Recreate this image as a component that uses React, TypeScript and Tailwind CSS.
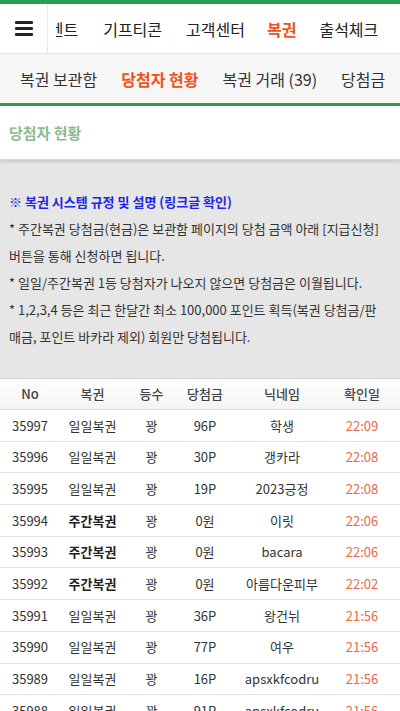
import React from "react";

const rows = [
  ["35997", "일일복권", false, "96P", "학생", "22:09"],
  ["35996", "일일복권", false, "30P", "갱카라", "22:08"],
  ["35995", "일일복권", false, "19P", "2023긍정", "22:08"],
  ["35994", "주간복권", true, "0원", "이릿", "22:06"],
  ["35993", "주간복권", true, "0원", "bacara", "22:06"],
  ["35992", "주간복권", true, "0원", "아름다운피부", "22:02"],
  ["35991", "일일복권", false, "36P", "왕건뉘", "21:56"],
  ["35990", "일일복권", false, "77P", "여우", "21:56"],
  ["35989", "일일복권", false, "16P", "apsxkfcodru", "21:56"],
  ["35988", "일일복권", false, "91P", "apsxkfcodru", "21:56"],
] as const;

const font = { fontFamily: '"Noto Sans CJK KR", "Noto Sans", sans-serif' };

export default function App() {
  return (
    <div className="w-[400px] h-[711px] overflow-hidden bg-white text-[#333]" style={font}>
      <div className="h-[4px] bg-[#22a24c]" />
      {/* top nav */}
      <div className="flex h-[50px] border-b border-[#e3e3e3] bg-white">
        <div className="w-[48px] shrink-0 flex items-center justify-center border-r border-[#e8e8e8]">
          <div className="flex flex-col gap-[3px] w-[18px]">
            <div className="h-[3px] bg-[#222] rounded-[1px]" />
            <div className="h-[3px] bg-[#222] rounded-[1px]" />
            <div className="h-[3px] bg-[#222] rounded-[1px]" />
          </div>
        </div>
        <div className="flex-1 pl-[8px] flex">
          <div className="flex-1 overflow-hidden">
            <div className="flex items-center h-full ml-[-22px] text-[16px] whitespace-nowrap text-[#222]">
              <span>이벤트</span>
              <span className="ml-[25px]">기프티콘</span>
              <span className="ml-[24px]">고객센터</span>
              <span className="ml-[22px] text-[#f0521c] font-bold">복권</span>
              <span className="ml-[23px]">출석체크</span>
            </div>
          </div>
        </div>
      </div>
      {/* sub nav */}
      <div className="flex items-center h-[52px] bg-[#f6f6f6] border-b-[3px] border-[#2e9e50] pl-[20px] gap-[24px] text-[16px] whitespace-nowrap text-[#333] overflow-hidden">
        <span>복권 보관함</span>
        <span className="text-[#f0521c] font-bold">당첨자 현황</span>
        <span>복권 거래 (39)</span>
        <span>당첨금</span>
      </div>
      {/* title */}
      <div className="h-[54px] flex items-center pl-[9px] pt-[2px] text-[15px] font-bold text-[#8cbb92] border-b border-[#d8d8d8] shadow-[0_2px_3px_rgba(0,0,0,0.12)] relative">
        당첨자 현황
      </div>
      {/* info box */}
      <div className="bg-[#e6e6e6] pt-[28px] pb-[28px] px-[9px] text-[13px] leading-[27px] text-[#333] whitespace-nowrap">
        <div className="text-[#1c25e8] font-bold">※ 복권 시스템 규정 및 설명 (링크글 확인)</div>
        <div>* 주간복권 당첨금(현금)은 보관함 페이지의 당첨 금액 아래 [지급신청]</div>
        <div>버튼을 통해 신청하면 됩니다.</div>
        <div>* 일일/주간복권 1등 당첨자가 나오지 않으면 당첨금은 이월됩니다.</div>
        <div>* 1,2,3,4 등은 최근 한달간 최소 100,000 포인트 획득(복권 당첨금/판</div>
        <div>매금, 포인트 바카라 제외) 회원만 당첨됩니다.</div>
      </div>
      {/* table */}
      <div className="border-t border-[#d4d4d4] text-[13px]">
        <div className="grid grid-cols-[60px_65px_53px_54px_100px_60px] h-[31px] items-center text-center font-medium text-[#444] bg-gradient-to-b from-white to-[#f4f4f4] border-b border-[#dcdcdc]">
          <div>No</div>
          <div>복권</div>
          <div>등수</div>
          <div>당첨금</div>
          <div>닉네임</div>
          <div>확인일</div>
        </div>
        {rows.map((r) => (
          <div
            key={r[0]}
            className="grid grid-cols-[60px_65px_53px_54px_100px_60px] h-[31.7px] items-center text-center border-b border-[#e2e2e2] text-[#333]"
          >
            <div>{r[0]}</div>
            <div className={r[2] ? "font-bold text-[#222]" : ""}>{r[1]}</div>
            <div>꽝</div>
            <div>{r[3]}</div>
            <div>{r[4]}</div>
            <div className="text-[#ea6a45]">{r[5]}</div>
          </div>
        ))}
      </div>
    </div>
  );
}
